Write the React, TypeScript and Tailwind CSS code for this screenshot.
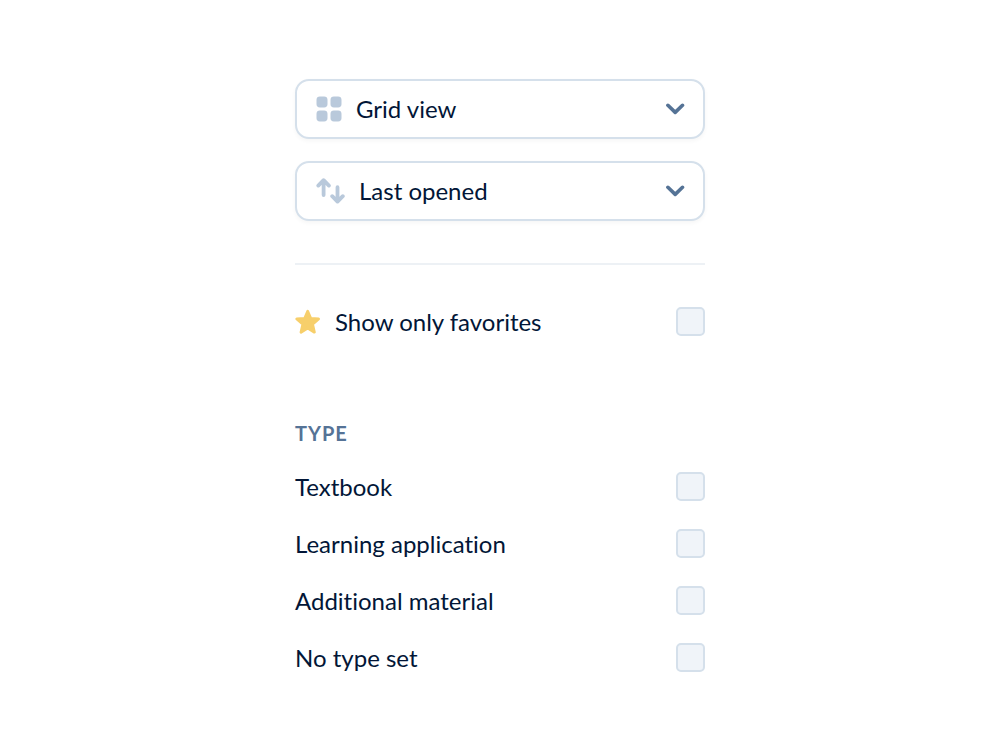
import type { ReactNode } from "react";

const GridIcon = () => (
  <svg viewBox="0 0 26 26" className="h-[26px] w-[26px] shrink-0" fill="#b9c9db" aria-hidden>
    <rect x="0.5" y="0.5" width="11" height="11" rx="3.4" />
    <rect x="14.5" y="0.5" width="11" height="11" rx="3.4" />
    <rect x="0.5" y="14.5" width="11" height="11" rx="3.4" />
    <rect x="14.5" y="14.5" width="11" height="11" rx="3.4" />
  </svg>
);

const SortIcon = () => (
  <svg
    viewBox="0 0 29 26"
    className="h-[26px] w-[29px] shrink-0"
    fill="none"
    stroke="#b9c9db"
    strokeWidth="3.8"
    strokeLinecap="round"
    strokeLinejoin="round"
    aria-hidden
  >
    <path d="M2.3 7.6 7.6 2.2l5.3 5.4M7.6 3v14" />
    <path d="M16.2 18.2l5.3 5.4 5.3-5.4M21.5 23V9.2" />
  </svg>
);

const ChevronIcon = () => (
  <svg
    viewBox="0 0 20 12"
    className="pointer-events-none absolute right-[18px] h-3 w-5"
    fill="none"
    stroke="#557396"
    strokeWidth="3.6"
    strokeLinecap="round"
    strokeLinejoin="round"
    aria-hidden
  >
    <path d="M2.9 2.3 10.2 9.4l7.3-7.1" />
  </svg>
);

const StarIcon = () => (
  <svg viewBox="0 0 26 26" className="h-[26px] w-[26px] shrink-0" fill="#f7cf6b" stroke="#f7cf6b" strokeWidth="2.8" strokeLinejoin="round" aria-hidden>
    <path d="M12.7 2.2l3 7.1 7.9.7-6 5.2 1.8 8-6.7-4.2-6.7 4.2 1.8-8-6-5.2 7.9-.7z" />
  </svg>
);

type DropdownProps = {
  label: string;
  icon: ReactNode;
  options: string[];
};

function Dropdown({ label, icon, options }: DropdownProps) {
  return (
    <div className="relative flex h-[60px] items-center rounded-[14px] border-2 border-[#d5e0eb] bg-white pl-[19px] shadow-[0_2px_4px_rgba(0,0,0,0.04)]">
      {icon}
      <select aria-label={label} className="h-full min-w-0 flex-1 cursor-pointer appearance-none bg-transparent pl-3.5 pr-12 outline-none">
        {options.map((option) => (
          <option key={option}>{option}</option>
        ))}
      </select>
      <ChevronIcon />
    </div>
  );
}

function CheckRow({ children }: { children: ReactNode }) {
  return (
    <label className="flex h-[29px] cursor-pointer items-center justify-between">
      <span className="flex items-center gap-3.5">{children}</span>
      <input
        type="checkbox"
        className="h-[29px] w-[29px] shrink-0 cursor-pointer appearance-none rounded-[5px] border-2 border-[#d5e0eb] bg-[#f0f4f9] checked:bg-[#557396]"
      />
    </label>
  );
}

const types = ["Textbook", "Learning application", "Additional material", "No type set"];

export default function App() {
  return (
    <main className="min-h-screen bg-white px-4 py-[79px] font-['Lato',sans-serif] text-[24px] leading-[26px] text-[#021637] [font-variant-ligatures:none]">
      <form className="mx-auto max-w-[410px]">
        <div className="flex flex-col gap-[22px]">
          <Dropdown label="View" icon={<GridIcon />} options={["Grid view", "List view"]} />
          <Dropdown label="Sort by" icon={<SortIcon />} options={["Last opened", "Name"]} />
        </div>

        <hr className="my-[42px] border-t-2 border-[#edf1f5]" />

        <CheckRow>
          <StarIcon />
          Show only favorites
        </CheckRow>

        <fieldset className="mt-[84px]">
          <legend className="text-[20px] font-bold tracking-wider text-[#557396]">TYPE</legend>
          <div className="mt-[26px] flex flex-col gap-7">
            {types.map((type) => (
              <CheckRow key={type}>{type}</CheckRow>
            ))}
          </div>
        </fieldset>
      </form>
    </main>
  );
}
